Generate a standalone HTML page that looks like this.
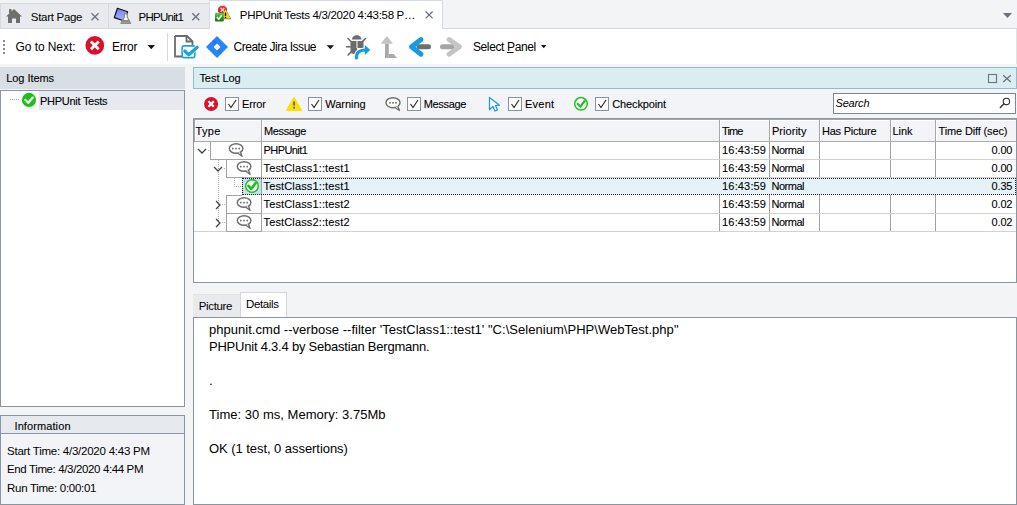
<!DOCTYPE html>
<html><head><meta charset="utf-8">
<style>
html,body{margin:0;padding:0;width:1017px;height:505px;overflow:hidden;background:#f3f4f6;position:relative}
.t{position:absolute;white-space:pre;font-family:"Liberation Sans",sans-serif}
.k{-webkit-text-stroke:0.1px currentColor}
.b{position:absolute;box-sizing:border-box}
svg{position:absolute;overflow:visible}
</style></head><body>
<!-- TAB BAR -->
<div class="b" style="left:0;top:0;width:1017px;height:29px;background:#f3f4f6"></div>
<div class="b" style="left:0;top:3px;width:209px;height:26px;background:#e8eaee;border-top:1px solid #d6dae0;border-bottom:1px solid #d3d8de"></div>
<div class="b" style="left:108px;top:4px;width:1px;height:24px;background:#d6dae0"></div>
<div class="b" style="left:0;top:4px;width:1px;height:24px;background:#d6dae0"></div>
<div class="b" style="left:442px;top:28px;width:575px;height:1px;background:#d3d8de"></div>
<div class="b" style="left:209px;top:0;width:234px;height:30px;background:#fff;border:1px solid #d6dae0;border-bottom:none"></div>
<!-- home icon -->
<svg style="left:0;top:0" width="30" height="29">
  <path d="M6 16.5 L14 9 L22 16.5 L20 16.5 L20 23 L16 23 L16 18.5 L12 18.5 L12 23 L8 23 L8 16.5 Z" fill="#6e6e6e"/>
  <rect x="9" y="9" width="2.5" height="4" fill="#6e6e6e"/>
</svg>
<!-- phpunit1 icon -->
<svg style="left:0;top:0" width="140" height="29">
  <defs><linearGradient id="pg" x1="0.2" y1="0" x2="0.5" y2="1"><stop offset="0" stop-color="#6d7cff"/><stop offset="1" stop-color="#aeb8ff"/></linearGradient>
  <linearGradient id="rg" x1="0" y1="0" x2="0" y2="1"><stop offset="0" stop-color="#f23a3a"/><stop offset="1" stop-color="#c40f14"/></linearGradient>
  <linearGradient id="gg" x1="0" y1="0" x2="0" y2="1"><stop offset="0" stop-color="#62c862"/><stop offset="0.6" stop-color="#1f9e1f"/><stop offset="1" stop-color="#0d6e0d"/></linearGradient></defs>
  <path d="M117.4 8.3 L127.6 11.8 L124.5 21 L114.3 17.6 Z" fill="url(#pg)" stroke="#111" stroke-width="1.2" stroke-linejoin="round"/>
  <path d="M124.3 13.8 L127.3 13.8 L127.3 17.2 L130.6 23.3 L121 23.3 L124.3 17.2 Z" fill="#fafafa" stroke="#8a8a8a" stroke-width="1.2" stroke-linejoin="round"/>
  <path d="M122.6 20 L128.8 20 L130.2 22.8 L121.3 22.8 Z" fill="#8a8a8a"/>
</svg>
<!-- active tab icon -->
<svg style="left:0;top:0" width="240" height="29">
  <path d="M220.5 5.8 L224.5 5.8 L227 8.3 L227 11.8 L224.5 14 L220.5 14 L218 11.8 L218 8.3 Z" fill="url(#rg)"/>
  <path d="M220.6 8 L224.4 11.8 M224.4 8 L220.6 11.8" stroke="#ffd6d6" stroke-width="1.3"/>
  <path d="M226 9.6 L231.4 19.3 L221 19.3 Z" fill="#6f6a9a"/>
  <path d="M225.5 9.3 L230.5 18.6 L220.5 18.6 Z" fill="#ffdc00"/>
  <rect x="224.8" y="12.6" width="1.4" height="3.6" fill="#111"/>
  <rect x="224.8" y="17" width="1.4" height="1.2" fill="#111"/>
  <rect x="215" y="12.8" width="8.8" height="8.8" rx="1.3" fill="url(#gg)"/>
  <path d="M216.9 17 L218.8 19.2 L221.8 15" stroke="#fff" stroke-width="1.5" fill="none"/>
</svg>
<!-- tab close X's -->
<svg style="left:0;top:0" width="440" height="29">
  <path d="M91.5 13.3 L98.5 20.2 M98.5 13.3 L91.5 20.2" stroke="#6b7280" stroke-width="1.3"/>
  <path d="M192.3 13.3 L199.3 20.2 M199.3 13.3 L192.3 20.2" stroke="#6b7280" stroke-width="1.3"/>
  <path d="M425.6 11.5 L432.6 18.4 M432.6 11.5 L425.6 18.4" stroke="#6b7280" stroke-width="1.3"/>
  <path d="M1003 13 L1012 13 L1007.5 18 Z" fill="#6a717d"/>
</svg>

<!-- TOOLBAR -->
<div class="b" style="left:0;top:29px;width:1017px;height:35px;background:#fff"></div>
<div class="b" style="left:0;top:64px;width:1017px;height:3px;background:#f3f4f6"></div>
<div class="b" style="left:1016px;top:29px;width:1px;height:35px;background:#dfe3e8"></div>
<svg style="left:0;top:0" width="560" height="64">
  <rect x="3" y="40" width="2" height="2" fill="#8a8a8a"/>
  <rect x="3" y="44" width="2" height="2" fill="#8a8a8a"/>
  <rect x="3" y="48" width="2" height="2" fill="#8a8a8a"/>
  <rect x="3" y="52" width="2" height="2" fill="#8a8a8a"/>
  <!-- error icon -->
  <circle cx="94.8" cy="45.4" r="9.35" fill="#d9112b"/>
  <path d="M90.9 41.5 L98.7 49.3 M98.7 41.5 L90.9 49.3" stroke="#fff" stroke-width="2.9"/>
  <path d="M147.5 45 L155 45 L151.25 49.2 Z" fill="#111"/>
  <rect x="167" y="33" width="1" height="28" fill="#d9d9d9"/>
  <!-- doc check -->
  <path d="M175 36 L187 36 L192.5 41.5 L192.5 45 M182 56.5 L175 56.5 Z M175 36 L175 56.5" stroke="#6b6b6b" stroke-width="1.8" fill="none" stroke-linejoin="round"/>
  <path d="M186.5 36 L186.5 41.5 L192.5 41.5" stroke="#6b6b6b" stroke-width="1.8" fill="none"/>
  <rect x="182.2" y="45.9" width="12.6" height="11.7" rx="1.6" fill="#fff" stroke="#1ba1e2" stroke-width="1.7"/>
  <path d="M184.8 51 L188.8 54.8 L197.2 47.2" stroke="#fff" stroke-width="4.4" fill="none" stroke-linecap="round" stroke-linejoin="round"/>
  <path d="M184.8 51 L188.8 54.8 L197.2 47.2" stroke="#1ba1e2" stroke-width="3.2" fill="none" stroke-linecap="round" stroke-linejoin="round"/>
  <!-- jira -->
  <path d="M217 36 L228 47 L217 58 L206 47 Z" fill="#2684ff"/>
  <path d="M213 40.5 L217.5 45" stroke="#1a5fd0" stroke-width="2" opacity="0.4"/><path d="M216.5 49 L221 53.5" stroke="#1a5fd0" stroke-width="2" opacity="0.4"/>
  <path d="M217 43.6 L220.4 47 L217 50.4 L213.6 47 Z" fill="#fff"/>
  <path d="M326.7 45.3 L334 45.3 L330.35 49.3 Z" fill="#111"/>
  <!-- bug -->
  <path d="M352 39.5 A4.5 4 0 0 1 361.5 39.5 Z" fill="#6b6b6b"/>
  <path d="M350.5 41 L363.5 41 L363.5 48 L357 48 L357 55 L350.5 53 Z" fill="#6b6b6b"/>
  <path d="M357 41 L357 48" stroke="#fff" stroke-width="1"/>
  <path d="M348 38.5 L351 41.5 M365.5 38.5 L362.5 41.5 M346.5 46.8 L350.5 46.8 M348 55 L351 52" stroke="#6b6b6b" stroke-width="1.6" stroke-linecap="round"/>
  <path d="M356.5 58 C356 52 360 50 366 50" stroke="#fff" stroke-width="5" fill="none"/>
  <path d="M356.5 58 C356 52 360 50 366 50" stroke="#139ae4" stroke-width="3.2" fill="none" stroke-linecap="round"/>
  <path d="M364.8 45 L370.3 50 L364.8 55 Z" fill="#139ae4"/>
  <!-- up arrow -->
  <path d="M380.7 43.8 L386.9 36 L393 43.8 Z" fill="#c3c3c3"/>
  <rect x="385" y="43.8" width="3.8" height="14.2" fill="#a9a9a9"/>
  <path d="M388.8 53.9 L393.5 53.9 L397 58 L388.8 58 Z" fill="#a9a9a9"/>
  <!-- left arrow -->
  <path d="M419 46.8 L428.5 46.8" stroke="#6e6e6e" stroke-width="5" stroke-linecap="round"/>
  <path d="M421 39.5 L411.5 46.8 L421 54.2" stroke="#139ae4" stroke-width="4.9" fill="none" stroke-linecap="round" stroke-linejoin="round"/>
  <!-- right arrow -->
  <path d="M442.5 46.8 L452 46.8" stroke="#a5a5a5" stroke-width="5" stroke-linecap="round"/>
  <path d="M449 39.5 L459.5 46.8 L449 54.2" stroke="#c4c4c4" stroke-width="4.9" fill="none" stroke-linecap="round" stroke-linejoin="round"/>
  <rect x="507" y="52" width="6.5" height="1" fill="#111"/>
  <path d="M541 45 L546.5 45 L543.75 48.2 Z" fill="#111"/>
</svg>

<!-- LEFT PANEL -->
<div class="b" style="left:0;top:67px;width:185px;height:22px;background:#d9dde4"></div>
<div class="b" style="left:0;top:90px;width:185px;height:317px;background:#fff;border:1px solid #8a94a4"></div>
<div class="b" style="left:39px;top:91px;width:145px;height:19px;background:#e6e9ee"></div>
<svg style="left:0;top:0" width="60" height="120">
  <path d="M10 99.5 L19 99.5" stroke="#a8a8a8" stroke-width="1" stroke-dasharray="1 1"/>
  <circle cx="29" cy="99.9" r="7.1" fill="#19c119"/>
  <path d="M25.3 99.8 L28.2 102.8 L32.8 97.6" stroke="#fff" stroke-width="2.2" fill="none" stroke-linecap="round" stroke-linejoin="round"/>
</svg>

<!-- INFO PANEL -->
<div class="b" style="left:0;top:415px;width:185px;height:90px;background:#f3f4f7;border:1px solid #8a94a4"></div>
<div class="b" style="left:1px;top:416px;width:183px;height:18px;background:#e6e9ee;border-bottom:1px solid #8a94a4"></div>

<!-- TEST LOG PANEL -->
<div class="b" style="left:193px;top:67px;width:824px;height:22px;background:#daedf1;border:1px solid #93bbcf"></div>
<svg style="left:0;top:0" width="1017" height="120">
  <rect x="988.5" y="74.5" width="8" height="8" fill="none" stroke="#6b7280" stroke-width="1.1"/>
  <path d="M1003.2 75.2 L1010.8 82 M1010.8 75.2 L1003.2 82" stroke="#6b7280" stroke-width="1.3"/>
</svg>
<!-- filter bar -->
<div class="b" style="left:193px;top:89px;width:824px;height:29px;background:#f3f4f7"></div>
<svg style="left:0;top:0" width="1017" height="120">
  <circle cx="211.1" cy="104" r="7" fill="#d9112b"/>
  <path d="M208.4 101.3 L213.8 106.7 M213.8 101.3 L208.4 106.7" stroke="#fff" stroke-width="2.3"/>
  <rect x="225.5" y="97.5" width="13" height="13" fill="#fff" stroke="#8792a5" stroke-width="1"/>
  <path d="M228.5 104 L231 107.5 L236 100" stroke="#222" stroke-width="1.1" fill="none"/>
  <path d="M294 97.9 L301.3 110.2 L286.7 110.2 Z" fill="#ffe000" stroke="#ffe000" stroke-width="1.4" stroke-linejoin="round"/>
  <rect x="293.2" y="101.5" width="1.8" height="4" fill="#5b6270"/>
  <rect x="293.2" y="106.8" width="1.8" height="1.8" fill="#5b6270"/>
  <rect x="308.5" y="97.5" width="13" height="13" fill="#fff" stroke="#8792a5" stroke-width="1"/>
  <path d="M311.5 104 L314 107.5 L319 100" stroke="#222" stroke-width="1.1" fill="none"/>
  <!-- message bubble -->
  <ellipse cx="393" cy="102.7" rx="7" ry="5" fill="#fff" stroke="#6b6b6b" stroke-width="1.4"/>
  <path d="M394.5 107.3 L399.5 110.5 L397.8 106.5" fill="#fff" stroke="#6b6b6b" stroke-width="1.3" stroke-linejoin="round"/>
  <rect x="389.2" y="102" width="1.6" height="1.6" fill="#6b6b6b"/>
  <rect x="392.2" y="102" width="1.6" height="1.6" fill="#6b6b6b"/>
  <rect x="395.2" y="102" width="1.6" height="1.6" fill="#6b6b6b"/>
  <rect x="407.5" y="97.5" width="13" height="13" fill="#fff" stroke="#8792a5" stroke-width="1"/>
  <path d="M410.5 104 L413 107.5 L418 100" stroke="#222" stroke-width="1.1" fill="none"/>
  <!-- cursor -->
  <path d="M489.5 97.5 L499.5 105.2 L495.5 105.6 L497.5 110 L495 111 L493 106.6 L489.5 109.5 Z" fill="#fff" stroke="#1a9be6" stroke-width="1.3" stroke-linejoin="round"/>
  <rect x="508.5" y="97.5" width="13" height="13" fill="#fff" stroke="#8792a5" stroke-width="1"/>
  <path d="M511.5 104 L514 107.5 L519 100" stroke="#222" stroke-width="1.1" fill="none"/>
  <!-- checkpoint -->
  <circle cx="581" cy="103.8" r="6.3" fill="#fff" stroke="#1ec21e" stroke-width="1.5"/>
  <path d="M577.8 104 L580.3 106.6 L584.5 101.2" stroke="#1ec21e" stroke-width="2.2" fill="none" stroke-linecap="round" stroke-linejoin="round"/>
  <rect x="595.5" y="97.5" width="13" height="13" fill="#fff" stroke="#8792a5" stroke-width="1"/>
  <path d="M598.5 104 L601 107.5 L606 100" stroke="#222" stroke-width="1.1" fill="none"/>
</svg>
<div class="b" style="left:833px;top:93px;width:183px;height:21px;background:#fff;border:1px solid #7d8696"></div>
<svg style="left:0;top:0" width="1017" height="120">
  <circle cx="1006.4" cy="101.4" r="3.2" fill="none" stroke="#333" stroke-width="1.1"/>
  <path d="M1004.1 103.7 L1000.3 107.5" stroke="#333" stroke-width="1.4" stroke-linecap="round"/>
</svg>

<!-- GRID -->
<div class="b" style="left:193px;top:118px;width:824px;height:165px;background:#fff;border:1px solid #8a95a6"></div>
<div class="b" style="left:194px;top:119px;width:822px;height:23px;background:#f3f4f7;border-top:1px solid #a6a6a6;border-left:1px solid #a6a6a6;border-bottom:1px solid #acacac;box-shadow:inset 1px 1px 0 #fff"></div>
<div id="gridlines"></div>
<svg style="left:0;top:0" width="1017" height="290">
  <!-- header column separators -->
  <g fill="#a8a8a8">
    <rect x="261" y="120" width="1" height="21"/>
    <rect x="719" y="120" width="1" height="21"/>
    <rect x="769" y="120" width="1" height="21"/>
    <rect x="819" y="120" width="1" height="21"/>
    <rect x="890" y="120" width="1" height="21"/>
    <rect x="935" y="120" width="1" height="21"/>
  </g>
  <g fill="#fff">
    <rect x="262" y="120" width="1" height="21"/>
    <rect x="720" y="120" width="1" height="21"/>
    <rect x="770" y="120" width="1" height="21"/>
    <rect x="820" y="120" width="1" height="21"/>
    <rect x="891" y="120" width="1" height="21"/>
    <rect x="936" y="120" width="1" height="21"/>
  </g>
  <!-- row lines -->
  <g fill="#a3a3a3">
    <rect x="261" y="142" width="1" height="90"/>
    <rect x="719" y="142" width="1" height="90"/>
    <rect x="769" y="142" width="1" height="90"/>
    <rect x="819" y="142" width="1" height="90"/>
    <rect x="890" y="142" width="1" height="90"/>
    <rect x="935" y="142" width="1" height="90"/>
  </g>
  <g fill="#d2d2d2">
    <rect x="262" y="159" width="754" height="1"/>
    <rect x="262" y="177" width="754" height="1"/>
    <rect x="262" y="213" width="754" height="1"/>
    <rect x="262" y="231" width="754" height="1"/>
    <rect x="194" y="231" width="32" height="1"/>
  </g>
  <g fill="#a3a3a3">
    <rect x="210" y="159" width="51" height="1"/>
    <rect x="226" y="177" width="35" height="1"/>
    <rect x="226" y="213" width="35" height="1"/>
    <rect x="226" y="231" width="35" height="1"/>
    <rect x="210" y="142" width="1" height="18"/>
    <rect x="226" y="160" width="1" height="18"/>
    <rect x="226" y="196" width="1" height="36"/>
  </g>
  <!-- selected row -->
  <rect x="242" y="178" width="774" height="17" fill="#e5f3f8"/>
  <rect x="242" y="178" width="19" height="17" fill="#c6e1ea"/>
  <rect x="261" y="178" width="1" height="17" fill="#a3a3a3"/>
  <rect x="226" y="195" width="16" height="1" fill="#a3a3a3"/>
  <!-- tree dotted lines -->
  <path d="M218.5 160 L218.5 222" stroke="#b0b0b0" stroke-width="1" stroke-dasharray="1 1"/>
  <path d="M234.5 178 L234.5 186" stroke="#b0b0b0" stroke-width="1" stroke-dasharray="1 1"/>
  <path d="M234 186.5 L242 186.5" stroke="#b0b0b0" stroke-width="1" stroke-dasharray="1 1"/>
  <rect x="208" y="150" width="1" height="1" fill="#b0b0b0"/>
  <rect x="224" y="168" width="1" height="1" fill="#b0b0b0"/>
  <rect x="222" y="204" width="1" height="1" fill="#b0b0b0"/>
  <rect x="224" y="204" width="1" height="1" fill="#b0b0b0"/>
  <rect x="222" y="222" width="1" height="1" fill="#b0b0b0"/>
  <rect x="224" y="222" width="1" height="1" fill="#b0b0b0"/>
  <!-- chevrons -->
  <path d="M198 149 L202 153 L206 149" stroke="#444" stroke-width="1.3" fill="none"/>
  <path d="M214 167 L218 171 L222 167" stroke="#444" stroke-width="1.3" fill="none"/>
  <path d="M216 201 L220 205 L216 209" stroke="#444" stroke-width="1.3" fill="none"/>
  <path d="M216 219 L220 223 L216 227" stroke="#444" stroke-width="1.3" fill="none"/>
  <!-- bubbles -->
  <g stroke="#6b6b6b" fill="#fff">
    <ellipse cx="236.1" cy="148.5" rx="6.8" ry="4.7" stroke-width="1.4"/>
    <path d="M237.5 153 L242 156.3 L240.5 152" stroke-width="1.3" stroke-linejoin="round"/>
    <rect x="232" y="147.8" width="1.6" height="1.6" fill="#6b6b6b" stroke="none"/>
    <rect x="235.2" y="147.8" width="1.6" height="1.6" fill="#6b6b6b" stroke="none"/>
    <rect x="238.4" y="147.8" width="1.6" height="1.6" fill="#6b6b6b" stroke="none"/>
  </g>

  <g transform="translate(8 18)" stroke="#6b6b6b" fill="#fff">
    <ellipse cx="236.1" cy="148.5" rx="6.8" ry="4.7" stroke-width="1.4"/>
    <path d="M237.5 153 L242 156.3 L240.5 152" stroke-width="1.3" stroke-linejoin="round"/>
    <rect x="232" y="147.8" width="1.6" height="1.6" fill="#6b6b6b" stroke="none"/>
    <rect x="235.2" y="147.8" width="1.6" height="1.6" fill="#6b6b6b" stroke="none"/>
    <rect x="238.4" y="147.8" width="1.6" height="1.6" fill="#6b6b6b" stroke="none"/>
  </g>
  <g transform="translate(8 54)" stroke="#6b6b6b" fill="#fff">
    <ellipse cx="236.1" cy="148.5" rx="6.8" ry="4.7" stroke-width="1.4"/>
    <path d="M237.5 153 L242 156.3 L240.5 152" stroke-width="1.3" stroke-linejoin="round"/>
    <rect x="232" y="147.8" width="1.6" height="1.6" fill="#6b6b6b" stroke="none"/>
    <rect x="235.2" y="147.8" width="1.6" height="1.6" fill="#6b6b6b" stroke="none"/>
    <rect x="238.4" y="147.8" width="1.6" height="1.6" fill="#6b6b6b" stroke="none"/>
  </g>
  <g transform="translate(8 72)" stroke="#6b6b6b" fill="#fff">
    <ellipse cx="236.1" cy="148.5" rx="6.8" ry="4.7" stroke-width="1.4"/>
    <path d="M237.5 153 L242 156.3 L240.5 152" stroke-width="1.3" stroke-linejoin="round"/>
    <rect x="232" y="147.8" width="1.6" height="1.6" fill="#6b6b6b" stroke="none"/>
    <rect x="235.2" y="147.8" width="1.6" height="1.6" fill="#6b6b6b" stroke="none"/>
    <rect x="238.4" y="147.8" width="1.6" height="1.6" fill="#6b6b6b" stroke="none"/>
  </g>
  <!-- check in selected row -->
  <circle cx="252" cy="186" r="6.3" fill="#fff" stroke="#1ec21e" stroke-width="1.5"/>
  <path d="M248.6 186 L251.2 188.8 L255.6 183.2" stroke="#1ec21e" stroke-width="2.7" fill="none" stroke-linecap="round" stroke-linejoin="round"/>
</svg>

<!-- BOTTOM TABS -->
<div class="b" style="left:193px;top:294px;width:47px;height:23px;background:#e8eaee;border-top:1px solid #dde1e6"></div>
<div class="b" style="left:240px;top:292px;width:47px;height:26px;background:#fff;border:1px solid #d3d8de;border-bottom:none"></div>
<div class="b" style="left:193px;top:317px;width:824px;height:188px;background:#fff;border-top:1px solid #8a94a4;border-left:1px solid #8a94a4;border-right:1px solid #8a94a4;border-bottom:1px solid #8a94a4"></div>

<div class="b" style="left:242px;top:178px;width:774px;height:17px;border:1px dotted #2a1a1a"></div>
<div class='t' style='left:30.80px;top:12.27px;font-size:11.5px;line-height:11.5px;letter-spacing:-0.294px;color:#000;'>Start Page</div>
<div class='t' style='left:138.50px;top:12.27px;font-size:11.5px;line-height:11.5px;letter-spacing:-0.714px;color:#000;'>PHPUnit1</div>
<div class='t' style='left:239.80px;top:10.27px;font-size:11.5px;line-height:11.5px;letter-spacing:-0.317px;color:#000;'>PHPUnit Tests 4/3/2020 4:43:58 P…</div>
<div class='t' style='left:15.50px;top:40.84px;font-size:12px;line-height:12px;letter-spacing:-0.070px;color:#000;'>Go to Next:</div>
<div class='t' style='left:111.90px;top:40.84px;font-size:12px;line-height:12px;letter-spacing:-0.268px;color:#000;'>Error</div>
<div class='t' style='left:233.50px;top:40.84px;font-size:12px;line-height:12px;letter-spacing:-0.481px;color:#000;'>Create Jira Issue</div>
<div class='t' style='left:472.90px;top:40.84px;font-size:12px;line-height:12px;letter-spacing:-0.363px;color:#000;'>Select Panel</div>
<div class='t k' style='left:6.20px;top:72.69px;font-size:11px;line-height:11px;letter-spacing:-0.052px;color:#000;'>Log Items</div>
<div class='t k' style='left:199.40px;top:72.69px;font-size:11px;line-height:11px;letter-spacing:-0.042px;color:#000;'>Test Log</div>
<div class='t k' style='left:242.00px;top:98.69px;font-size:11px;line-height:11px;letter-spacing:-0.113px;color:#000;'>Error</div>
<div class='t k' style='left:325.20px;top:98.69px;font-size:11px;line-height:11px;letter-spacing:-0.010px;color:#000;'>Warning</div>
<div class='t k' style='left:423.70px;top:98.69px;font-size:11px;line-height:11px;letter-spacing:-0.323px;color:#000;'>Message</div>
<div class='t k' style='left:524.90px;top:98.69px;font-size:11px;line-height:11px;letter-spacing:0.265px;color:#000;'>Event</div>
<div class='t k' style='left:612.20px;top:98.69px;font-size:11px;line-height:11px;letter-spacing:-0.116px;color:#000;'>Checkpoint</div>
<div class='t' style='left:835.50px;top:97.69px;font-size:11px;line-height:11px;letter-spacing:-0.172px;color:#000;font-style:italic;'>Search</div>
<div class='t k' style='left:195.50px;top:125.69px;font-size:11px;line-height:11px;letter-spacing:0.380px;color:#000;'>Type</div>
<div class='t k' style='left:264.00px;top:125.69px;font-size:11px;line-height:11px;letter-spacing:-0.357px;color:#000;'>Message</div>
<div class='t k' style='left:722.00px;top:125.69px;font-size:11px;line-height:11px;letter-spacing:-0.849px;color:#000;'>Time</div>
<div class='t k' style='left:771.90px;top:125.69px;font-size:11px;line-height:11px;letter-spacing:0.052px;color:#000;'>Priority</div>
<div class='t k' style='left:822.00px;top:125.69px;font-size:11px;line-height:11px;letter-spacing:-0.236px;color:#000;'>Has Picture</div>
<div class='t k' style='left:892.50px;top:125.69px;font-size:11px;line-height:11px;letter-spacing:-0.062px;color:#000;'>Link</div>
<div class='t k' style='left:938.50px;top:125.69px;font-size:11px;line-height:11px;letter-spacing:-0.136px;color:#000;'>Time Diff (sec)</div>
<div class='t k' style='left:263.50px;top:144.69px;font-size:11px;line-height:11px;letter-spacing:-0.571px;color:#000;'>PHPUnit1</div>
<div class='t k' style='left:722.10px;top:144.69px;font-size:11px;line-height:11px;letter-spacing:0.153px;color:#000;'>16:43:59</div>
<div class='t k' style='left:771.50px;top:144.69px;font-size:11px;line-height:11px;letter-spacing:-0.491px;color:#000;'>Normal</div>
<div class='t k' style='left:991.50px;top:144.69px;font-size:11px;line-height:11px;letter-spacing:-0.141px;color:#000;'>0.00</div>
<div class='t k' style='left:263.50px;top:162.69px;font-size:11px;line-height:11px;letter-spacing:0.140px;color:#000;'>TestClass1::test1</div>
<div class='t k' style='left:722.10px;top:162.69px;font-size:11px;line-height:11px;letter-spacing:0.153px;color:#000;'>16:43:59</div>
<div class='t k' style='left:771.50px;top:162.69px;font-size:11px;line-height:11px;letter-spacing:-0.491px;color:#000;'>Normal</div>
<div class='t k' style='left:991.50px;top:162.69px;font-size:11px;line-height:11px;letter-spacing:-0.141px;color:#000;'>0.00</div>
<div class='t k' style='left:263.50px;top:180.69px;font-size:11px;line-height:11px;letter-spacing:0.140px;color:#000;'>TestClass1::test1</div>
<div class='t k' style='left:722.10px;top:180.69px;font-size:11px;line-height:11px;letter-spacing:0.153px;color:#000;'>16:43:59</div>
<div class='t k' style='left:771.50px;top:180.69px;font-size:11px;line-height:11px;letter-spacing:-0.491px;color:#000;'>Normal</div>
<div class='t k' style='left:991.50px;top:180.69px;font-size:11px;line-height:11px;letter-spacing:-0.141px;color:#000;'>0.35</div>
<div class='t k' style='left:263.50px;top:198.69px;font-size:11px;line-height:11px;letter-spacing:0.140px;color:#000;'>TestClass1::test2</div>
<div class='t k' style='left:722.10px;top:198.69px;font-size:11px;line-height:11px;letter-spacing:0.153px;color:#000;'>16:43:59</div>
<div class='t k' style='left:771.50px;top:198.69px;font-size:11px;line-height:11px;letter-spacing:-0.491px;color:#000;'>Normal</div>
<div class='t k' style='left:991.50px;top:198.69px;font-size:11px;line-height:11px;letter-spacing:-0.141px;color:#000;'>0.02</div>
<div class='t k' style='left:263.50px;top:216.69px;font-size:11px;line-height:11px;letter-spacing:0.140px;color:#000;'>TestClass2::test2</div>
<div class='t k' style='left:722.10px;top:216.69px;font-size:11px;line-height:11px;letter-spacing:0.153px;color:#000;'>16:43:59</div>
<div class='t k' style='left:771.50px;top:216.69px;font-size:11px;line-height:11px;letter-spacing:-0.491px;color:#000;'>Normal</div>
<div class='t k' style='left:991.50px;top:216.69px;font-size:11px;line-height:11px;letter-spacing:-0.141px;color:#000;'>0.02</div>
<div class='t' style='left:198.80px;top:301.27px;font-size:11.5px;line-height:11.5px;letter-spacing:-0.349px;color:#000;'>Picture</div>
<div class='t' style='left:246.00px;top:299.27px;font-size:11.5px;line-height:11.5px;letter-spacing:-0.359px;color:#000;'>Details</div>
<div class='t' style='left:209.00px;top:323.00px;font-size:13px;line-height:13px;letter-spacing:0.032px;color:#000;'>phpunit.cmd --verbose --filter &#x27;TestClass1::test1&#x27; &quot;C:\Selenium\PHP\WebTest.php&quot;</div>
<div class='t' style='left:209.00px;top:340.00px;font-size:13px;line-height:13px;letter-spacing:-0.219px;color:#000;'>PHPUnit 4.3.4 by Sebastian Bergmann.</div>
<div class='t' style='left:209.00px;top:374.00px;font-size:13px;line-height:13px;letter-spacing:-0.625px;color:#000;'>.</div>
<div class='t' style='left:209.00px;top:408.00px;font-size:13px;line-height:13px;letter-spacing:0.027px;color:#000;'>Time: 30 ms, Memory: 3.75Mb</div>
<div class='t' style='left:209.00px;top:442.00px;font-size:13px;line-height:13px;letter-spacing:-0.053px;color:#000;'>OK (1 test, 0 assertions)</div>
<div class='t k' style='left:14.50px;top:420.69px;font-size:11px;line-height:11px;letter-spacing:0.097px;color:#000;'>Information</div>
<div class='t' style='left:7.00px;top:446.27px;font-size:11.5px;line-height:11.5px;letter-spacing:-0.244px;color:#000;'>Start Time: 4/3/2020 4:43 PM</div>
<div class='t' style='left:7.00px;top:464.27px;font-size:11.5px;line-height:11.5px;letter-spacing:-0.371px;color:#000;'>End Time: 4/3/2020 4:44 PM</div>
<div class='t' style='left:7.00px;top:483.27px;font-size:11.5px;line-height:11.5px;letter-spacing:-0.280px;color:#000;'>Run Time: 0:00:01</div>
<div class='t k' style='left:40.00px;top:95.69px;font-size:11px;line-height:11px;letter-spacing:-0.268px;color:#000;'>PHPUnit Tests</div>
</body></html>
